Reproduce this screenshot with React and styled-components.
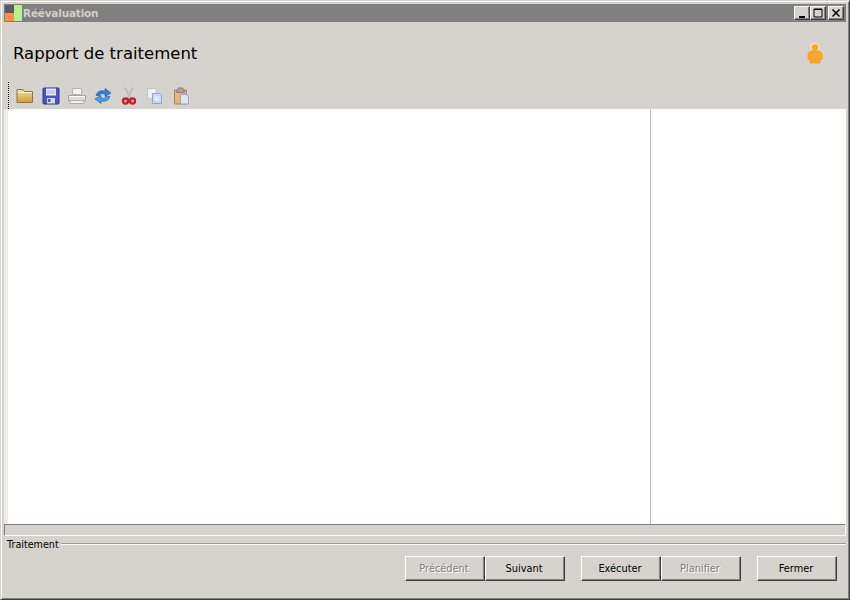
import React from "react";
import styled, { createGlobalStyle } from "styled-components";

const Global = createGlobalStyle`
  html, body { margin: 0; padding: 0; background: #d6d3ce; }
  #root { width: 850px; height: 600px; }
  * { box-sizing: border-box; }
`;

const Win = styled.div`
  width: 850px; height: 600px;
  display: flex; flex-direction: column;
  background: #d6d3ce;
  border-style: solid; border-width: 1px;
  border-color: #d6d3ce #404040 #404040 #d6d3ce;
  box-shadow: inset 1px 1px 0 #fff, inset -1px -1px 0 #808080;
  padding: 3px 3px 3px 3px;
  font-family: "DejaVu Sans", "Liberation Sans", sans-serif;
`;

const TitleBar = styled.div`
  height: 18px; flex: none;
  background: #808080;
  display: flex; align-items: center;
  padding: 0 1px 0 1px;
`;
const AppIcon = styled.svg`width: 17px; height: 16px; flex: none;`;
const TitleText = styled.span`
  margin-left: 1px;
  color: #d4d0c8;
  font-size: 10.5px; font-weight: 700;
  font-family: "DejaVu Sans", sans-serif;
  letter-spacing: -0.2px;
`;
const WinButtons = styled.div`
  margin-left: auto; display: flex; align-items: center; padding-right: 1px;
`;
const WinBtn = styled.div`
  width: 16px; height: 14px;
  margin-left: ${p => p.$gap || 0}px;
  background: #d6d3ce;
  border-style: solid; border-width: 1px;
  border-color: #fff #404040 #404040 #fff;
  box-shadow: inset -1px -1px 0 #808080;
  display: flex; align-items: center; justify-content: center;
  svg { display: block; }
`;

const Header = styled.div`
  height: 60px; flex: none;
  display: flex; align-items: center; justify-content: space-between;
  padding: 2px 22px 0 9px;
`;
const Heading = styled.h1`
  margin: 0;
  font-family: "DejaVu Sans", sans-serif;
  font-size: 16.5px; font-weight: 400;
  color: #000;
`;
const UserIcon = styled.svg`width: 18px; height: 22px; flex: none;`;

const Toolbar = styled.div`
  height: 27px; flex: none;
  display: flex; align-items: center;
  padding-left: 4px;
`;
const Grip = styled.div`
  width: 1px; height: 27px; flex: none;
  background: repeating-linear-gradient(to bottom, #000 0 1px, transparent 1px 2px);
  margin-right: 7px;
`;
const ToolIcon = styled.svg`
  width: 18px; height: 18px; flex: none; margin-right: 8px; margin-top: 1px;
  margin-left: ${p => p.$nudge || 0}px;
`;

const Workspace = styled.div`
  flex: 1; min-height: 0;
  display: flex;
  background: #fff;
  border-left: 4px solid #ecebe8;
`;
const MainPane = styled.div`flex: none; width: 642px; background: #fff;`;
const Splitter = styled.div`flex: none; width: 1px; background: #c4c2bd;`;
const SidePane = styled.div`flex: 1; background: #fff;`;

const StatusBar = styled.div`
  height: 12px; flex: none;
  background: #d6d3ce;
  border-top: 1px solid #808080;
  border-left: 1px solid #808080;
  border-right: 1px solid #fff;
  border-bottom: 1px solid #fff;
`;

const Group = styled.div`
  flex: none; height: 60px; display: flex; flex-direction: column;
`;
const Legend = styled.div`
  display: flex; align-items: center;
  height: 14px; margin-top: 1px;
  padding-left: 3px;
  font-size: 9.6px; color: #000;
`;
const LegendRule = styled.div`
  flex: 1; height: 2px; margin-left: 2px;
  border-top: 1px solid #9a9892; border-bottom: 1px solid #fff;
`;
const ButtonRow = styled.div`
  display: flex; justify-content: flex-end;
  padding: 5px 9px 0 0;
`;
const Btn = styled.button`
  width: 80px; height: 25px;
  margin-left: ${p => p.$gap || 0}px;
  padding: 0 2px 0 0;
  background: #d6d3ce;
  border-style: solid; border-width: 1px;
  border-color: #fff #404040 #404040 #fff;
  box-shadow: inset -1px -1px 0 #808080;
  font-family: "DejaVu Sans", sans-serif;
  font-size: 9.8px;
  color: #000;
  &:disabled { color: #808080; text-shadow: 1px 1px 0 #fff; }
`;

const Folder = () => (
  <ToolIcon viewBox="0 0 18 18">
    <defs><linearGradient id="f" x1="0" y1="0" x2="0" y2="1"><stop offset="0" stopColor="#fae29a" /><stop offset="1" stopColor="#cc9a38" /></linearGradient></defs>
    <path d="M1 2.5h6l1.5 2H16.5V15.5H1z" fill="url(#f)" stroke="#8c7444" strokeWidth="1" />
    <path d="M2 5.5h14" stroke="#fff3c4" />
  </ToolIcon>
);
const Floppy = () => (
  <ToolIcon viewBox="0 0 18 18">
    <rect x="1" y="1" width="16" height="16" rx="1" fill="#4a52cc" stroke="#2e3488" />
    <rect x="4" y="1.5" width="10" height="7" fill="#e8ecf8" />
    <path d="M4.5 4h9M4.5 6h9" stroke="#a8b0dc" />
    <rect x="5" y="11" width="8" height="5.5" fill="#d4d8ec" />
    <rect x="6" y="12" width="2.5" height="3" fill="#4a52cc" />
  </ToolIcon>
);
const Printer = () => (
  <ToolIcon viewBox="0 0 18 18">
    <path d="M4.5 1.5h9v6h-9z" fill="#f4f4f2" stroke="#b4b4b4" />
    <path d="M.5 8.5h17v5H.5z" fill="#dcdcda" stroke="#a4a4a4" />
    <path d="M1 9.5h16" stroke="#fff" />
    <path d="M2 13.5h14v3H2z" fill="#f0f0ee" stroke="#acacac" />
  </ToolIcon>
);
const Sync = () => (
  <ToolIcon viewBox="0 0 18 18">
    <path d="M2 8.5C3 4.5 7 3 11 4.2V1.5L17 6l-6 3.5V7C8 6 6 7 5.5 8.5z" fill="#2f80d8" stroke="#1c4f96" strokeWidth=".6" />
    <path d="M16 9.5C15 13.5 11 15 7 13.8v2.7L1 12l6-3.5V11c3 1 5 0 5.5-1.5z" fill="#4da0ec" stroke="#1c4f96" strokeWidth=".6" />
  </ToolIcon>
);
const Scissors = () => (
  <ToolIcon viewBox="0 0 18 18">
    <path d="M5 .5l5.5 10.5M13 .5L7.5 11" stroke="#bcbcbc" strokeWidth="2" fill="none" />
    <circle cx="5.5" cy="14" r="2.6" fill="#e8a0a0" stroke="#c0202c" strokeWidth="2.2" />
    <circle cx="12.5" cy="14" r="2.6" fill="#e8a0a0" stroke="#c0202c" strokeWidth="2.2" />
  </ToolIcon>
);
const Copy = () => (
  <ToolIcon viewBox="0 0 18 18">
    <path d="M1.5 1.5h7l2 2v8h-9z" fill="#eef0f8" stroke="#c0c4d4" />
    <path d="M6.5 6.5h7l2 2v8h-9z" fill="#c8d8fa" stroke="#98a4c4" />
    <path d="M8.5 9h5v5h-5z" fill="#dfe8fc" />
  </ToolIcon>
);
const Paste = () => (
  <ToolIcon $nudge={1} viewBox="0 0 18 18">
    <path d="M1.5 3h12v14h-12z" fill="#e4b870" stroke="#a88850" />
    <path d="M5 3.5V1h5v2.5h1.5v2H3.5v-2z" fill="#a8a49c" stroke="#7c7870" strokeWidth=".8" />
    <path d="M7.5 7.5h6l2 2v7.5h-8z" fill="#dce6fa" stroke="#98a4c4" />
  </ToolIcon>
);

export default function App() {
  return (
    <>
      <Global />
      <Win>
        <TitleBar>
          <AppIcon viewBox="0 0 17 16">
            <rect x="0" y="0" width="9" height="8" fill="#5a5a5a" />
            <rect x="0" y="8" width="9" height="8" fill="#f89050" />
            <rect x="9" y="0" width="8" height="16" fill="#b8f090" />
          </AppIcon>
          <TitleText>Réévaluation</TitleText>
          <WinButtons>
            <WinBtn>
              <svg width="10" height="10" viewBox="0 0 10 10"><path d="M2 8h6v2H2z" fill="#000" /></svg>
            </WinBtn>
            <WinBtn>
              <svg width="10" height="10" viewBox="0 0 10 10"><path d="M1 1h8v8H1z" fill="none" stroke="#000" /><path d="M1 1.5h8" stroke="#000" /></svg>
            </WinBtn>
            <WinBtn $gap={2}>
              <svg width="10" height="10" viewBox="0 0 10 10"><path d="M1.5 1.5l7 7M8.5 1.5l-7 7" stroke="#000" strokeWidth="1.5" /></svg>
            </WinBtn>
          </WinButtons>
        </TitleBar>
        <Header>
          <Heading>Rapport de traitement</Heading>
          <UserIcon viewBox="0 0 18 22">
            <circle cx="9" cy="5.5" r="4" fill="#f8a828" stroke="#fff2cc" strokeWidth="1" />
            <path d="M5 9h8l3 2.5v5.5l-2 .5V21H4v-3.5L2 17v-5.5z" fill="#f8a828" stroke="#e89c20" strokeWidth=".8" />
          </UserIcon>
        </Header>
        <Toolbar>
          <Grip />
          <Folder /><Floppy /><Printer /><Sync /><Scissors /><Copy /><Paste />
        </Toolbar>
        <Workspace>
          <MainPane />
          <Splitter />
          <SidePane />
        </Workspace>
        <StatusBar />
        <Group>
          <Legend>Traitement<LegendRule /></Legend>
          <ButtonRow>
            <Btn disabled>Précédent</Btn>
            <Btn>Suivant</Btn>
            <Btn $gap={16}>Exécuter</Btn>
            <Btn disabled>Planifier</Btn>
            <Btn $gap={16}>Fermer</Btn>
          </ButtonRow>
        </Group>
      </Win>
    </>
  );
}
